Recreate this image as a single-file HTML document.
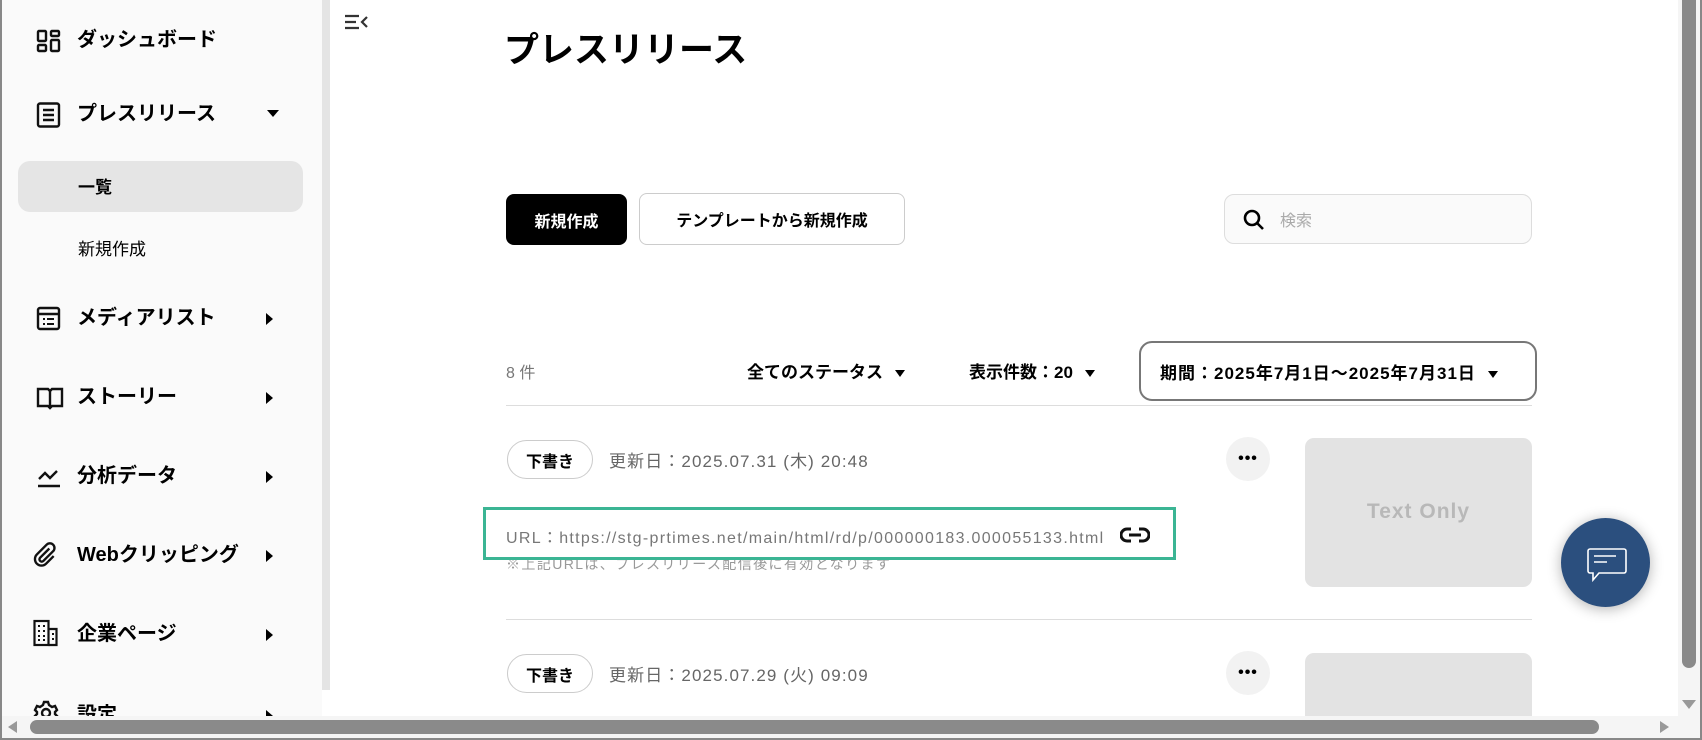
<!DOCTYPE html>
<html><head><meta charset="utf-8"><style>
*{margin:0;padding:0;box-sizing:border-box}
body{width:1702px;height:740px;overflow:hidden;background:#fff;position:relative;font-family:"Liberation Sans","Noto Sans CJK JP",sans-serif;color:#000}
.a{position:absolute;white-space:nowrap}
.side{left:2px;top:0;width:320px;height:716px;background:#fafafa}
.nav{font-size:20px;font-weight:bold;left:77px;line-height:26px}
.ic{position:absolute;left:36px}
.arr{position:absolute;left:266px;width:0;height:0;border-top:6px solid transparent;border-bottom:6px solid transparent;border-left:7px solid #000}
.btn{border-radius:8px;font-size:16px;font-weight:bold;display:flex;align-items:center;justify-content:center}
.pill{border:1px solid #ccc;border-radius:20px;font-size:16px;font-weight:bold;display:flex;align-items:center;justify-content:center;width:86px;height:39px;left:507px}
.date{left:609px;font-size:17px;color:#666;letter-spacing:1.1px}
.dots{width:44px;height:44px;border-radius:50%;background:#f2f2f2;left:1226px;text-align:center;font-weight:bold;font-size:16px;line-height:44px;letter-spacing:1px}
.thumb{left:1305px;width:227px;background:#e3e3e3;border-radius:9px}
.tri{display:inline-block;width:0;height:0;border-left:5px solid transparent;border-right:5px solid transparent;border-top:7px solid #000;margin-left:12px;vertical-align:middle}
</style></head><body>
<div class="a side"></div>
<div class="a" style="left:322px;top:0;width:8px;height:690px;background:#e4e4e4"></div>
<div class="a" style="left:0;top:0;width:2px;height:740px;background:#888"></div>

<svg class="ic" style="top:29px" width="26" height="26" viewBox="0 0 26 26" fill="none" stroke="#111" stroke-width="2.4"><rect x="2" y="2" width="8" height="10" rx="1"/><rect x="15" y="2" width="8" height="5" rx="1"/><rect x="2" y="16" width="8" height="6" rx="1"/><rect x="15" y="11" width="8" height="11" rx="1"/></svg>
<div class="a nav" style="top:27px">ダッシュボード</div>

<svg class="ic" style="top:102px" width="26" height="26" viewBox="0 0 26 26" fill="none" stroke="#111" stroke-width="2.4"><rect x="2" y="1.5" width="21" height="23" rx="2"/><path d="M7 8h11M7 13h11M7 18h11"/></svg>
<div class="a nav" style="top:101px">プレスリリース</div>
<div class="a" style="left:267px;top:110px;border-left:6px solid transparent;border-right:6px solid transparent;border-top:7px solid #000"></div>

<div class="a" style="left:18px;top:161px;width:285px;height:51px;background:#e5e5e5;border-radius:12px"></div>
<div class="a" style="left:78px;top:173px;font-size:17px;font-weight:bold">一覧</div>
<div class="a" style="left:78px;top:235px;font-size:17px">新規作成</div>

<svg class="ic" style="top:306px" width="26" height="26" viewBox="0 0 26 26" fill="none" stroke="#111" stroke-width="2.4"><rect x="2" y="2" width="21" height="21" rx="2"/><path d="M2 8h21"/><path d="M7 13h2M11 13h7M7 18h2M11 18h7" stroke-width="2"/></svg>
<div class="a nav" style="top:305px">メディアリスト</div>
<div class="arr" style="top:313px"></div>

<svg class="ic" style="top:386px" width="28" height="24" viewBox="0 0 28 24" fill="none" stroke="#111" stroke-width="2.4"><path d="M2 3h10l2 2 2-2h10v17H16l-2 2-2-2H2z"/><path d="M14 5v16"/></svg>
<div class="a nav" style="top:384px">ストーリー</div>
<div class="arr" style="top:392px"></div>

<svg class="ic" style="top:464px" width="26" height="24" viewBox="0 0 26 24" fill="none" stroke="#111" stroke-width="2.4"><path d="M3 15l6-6 5 5 7-7"/><path d="M2 22h22"/></svg>
<div class="a nav" style="top:463px">分析データ</div>
<div class="arr" style="top:471px"></div>

<svg class="ic" style="top:542px;left:32px" width="26" height="26" viewBox="0 0 24 24" fill="none" stroke="#111" stroke-width="2.2"><path d="M16 6l-8.5 8.5a2 2 0 0 0 3 3L19.5 8.5a4 4 0 0 0-6-6L4.5 11.5a6 6 0 0 0 8.5 8.5L20 13"/></svg>
<div class="a nav" style="top:542px">Webクリッピング</div>
<div class="arr" style="top:550px"></div>

<svg class="ic" style="top:619px;left:33px" width="26" height="28" viewBox="0 0 26 28" fill="none" stroke="#111" stroke-width="2.2"><rect x="1.5" y="2" width="14" height="24"/><path d="M15.5 10h8v16h-8"/><path d="M5 7h2M10 7h2M5 12h2M10 12h2M5 17h2M10 17h2M5 21h2M10 21h2M19 15h2M19 20h2" stroke-width="2"/></svg>
<div class="a nav" style="top:621px">企業ページ</div>
<div class="arr" style="top:629px"></div>

<svg class="ic" style="top:700px;left:33px" width="26" height="26" viewBox="0 0 26 26" fill="none" stroke="#111" stroke-width="2.4"><circle cx="13" cy="13" r="4"/><path d="M11 2h4l1 3 3 2 3-1 2 4-2 2v2l2 2-2 4-3-1-3 2-1 3h-4l-1-3-3-2-3 1-2-4 2-2v-2l-2-2 2-4 3 1 3-2z"/></svg>
<div class="a nav" style="top:702px">設定</div>
<div class="arr" style="top:710px"></div>

<svg class="a" style="left:345px;top:14px" width="24" height="18" viewBox="0 0 24 18" fill="none" stroke="#333" stroke-width="2.2"><path d="M0 2h14M0 8h11M0 14h14M22 3l-5 5 5 5"/></svg>
<div class="a" style="left:504px;top:28px;font-size:35px;font-weight:bold;line-height:46px">プレスリリース</div>

<div class="a btn" style="left:506px;top:194px;width:121px;height:51px;background:#000;color:#fff">新規作成</div>
<div class="a btn" style="left:639px;top:193px;width:266px;height:52px;border:1px solid #ccc;background:#fff">テンプレートから新規作成</div>

<div class="a" style="left:1224px;top:194px;width:308px;height:50px;border:1px solid #ddd;border-radius:10px;background:#fafafa"></div>
<svg class="a" style="left:1242px;top:208px" width="24" height="24" viewBox="0 0 24 24" fill="none" stroke="#000" stroke-width="2.6"><circle cx="10" cy="10" r="7"/><path d="M15 15l6 6"/></svg>
<div class="a" style="left:1280px;top:207px;font-size:16px;color:#aaa">検索</div>

<div class="a" style="left:506px;top:359px;font-size:16px;color:#777">8 件</div>
<div class="a" style="left:747px;top:358px;font-size:17px;font-weight:bold">全てのステータス<span class="tri"></span></div>
<div class="a" style="left:969px;top:358px;font-size:17px;font-weight:bold">表示件数：20<span class="tri"></span></div>
<div class="a" style="left:1139px;top:341px;width:398px;height:60px;border:2px solid #777;border-radius:13px"></div>
<div class="a" style="left:1160px;top:359px;font-size:17px;font-weight:bold;letter-spacing:1px">期間：2025年7月1日〜2025年7月31日<span class="tri"></span></div>
<div class="a" style="left:506px;top:405px;width:1026px;height:1px;background:#ddd"></div>

<div class="a pill" style="top:440px">下書き</div>
<div class="a date" style="top:447px">更新日：2025.07.31 (木) 20:48</div>
<div class="a dots" style="top:437px">•••</div>
<div class="a thumb" style="top:438px;height:149px"></div>
<div class="a" style="left:1305px;width:227px;top:500px;text-align:center;font-size:21px;font-weight:bold;color:#b8b8b8;letter-spacing:1px">Text Only</div>
<div class="a" style="left:506px;top:554px;font-size:14px;color:#999;letter-spacing:1.4px">※上記URLは、プレスリリース配信後に有効となります</div>
<div class="a" style="left:483px;top:507px;width:693px;height:53px;border:3px solid #3bb594;background:#fff"></div>
<div class="a" style="left:506px;top:524px;font-size:16px;color:#777;letter-spacing:1.3px">URL：https://stg-prtimes.net/main/html/rd/p/000000183.000055133.html</div>
<svg class="a" style="left:1120px;top:526px" width="30" height="18" viewBox="0 0 30 18" fill="none" stroke="#111" stroke-width="3"><path d="M11 3H7a6 6 0 0 0 0 12h4M19 3h4a6 6 0 0 1 0 12h-4M9 9h12"/></svg>
<div class="a" style="left:506px;top:619px;width:1026px;height:1px;background:#ddd"></div>

<div class="a pill" style="top:654px">下書き</div>
<div class="a date" style="top:661px">更新日：2025.07.29 (火) 09:09</div>
<div class="a dots" style="top:651px">•••</div>
<div class="a thumb" style="top:653px;height:80px"></div>

<div class="a" style="left:1561px;top:518px;width:89px;height:89px;border-radius:50%;background:#2b4f7e;box-shadow:0 2px 14px rgba(0,0,0,.3)"></div>
<svg class="a" style="left:1585px;top:548px" width="42" height="36" viewBox="0 0 42 36" fill="none" stroke="#fff" stroke-width="1.6"><path d="M5 1h34a2 2 0 0 1 2 2v20a2 2 0 0 1-2 2H14l-6 7v-7H5a2 2 0 0 1-2-2V3a2 2 0 0 1 2-2z"/><path d="M9 8h22M9 14h13"/></svg>

<div class="a" style="left:2px;top:716px;width:1698px;height:22px;background:#f5f5f5"></div>
<div class="a" style="left:30px;top:720px;width:1569px;height:14px;background:#8a8a8a;border-radius:7px"></div>
<div class="a" style="left:8px;top:721px;border-top:6px solid transparent;border-bottom:6px solid transparent;border-right:9px solid #999"></div>
<div class="a" style="left:1660px;top:721px;border-top:6px solid transparent;border-bottom:6px solid transparent;border-left:9px solid #999"></div>
<div class="a" style="left:1678px;top:0;width:22px;height:716px;background:#f5f5f5"></div>
<div class="a" style="left:1682px;top:0;width:14px;height:668px;background:#8a8a8a;border-radius:0 0 7px 7px"></div>
<div class="a" style="left:1682px;top:700px;border-left:7px solid transparent;border-right:7px solid transparent;border-top:9px solid #999"></div>
<div class="a" style="left:1700px;top:0;width:2px;height:740px;background:#888"></div>
<div class="a" style="left:0;top:738px;width:1702px;height:2px;background:#888"></div>
</body></html>
